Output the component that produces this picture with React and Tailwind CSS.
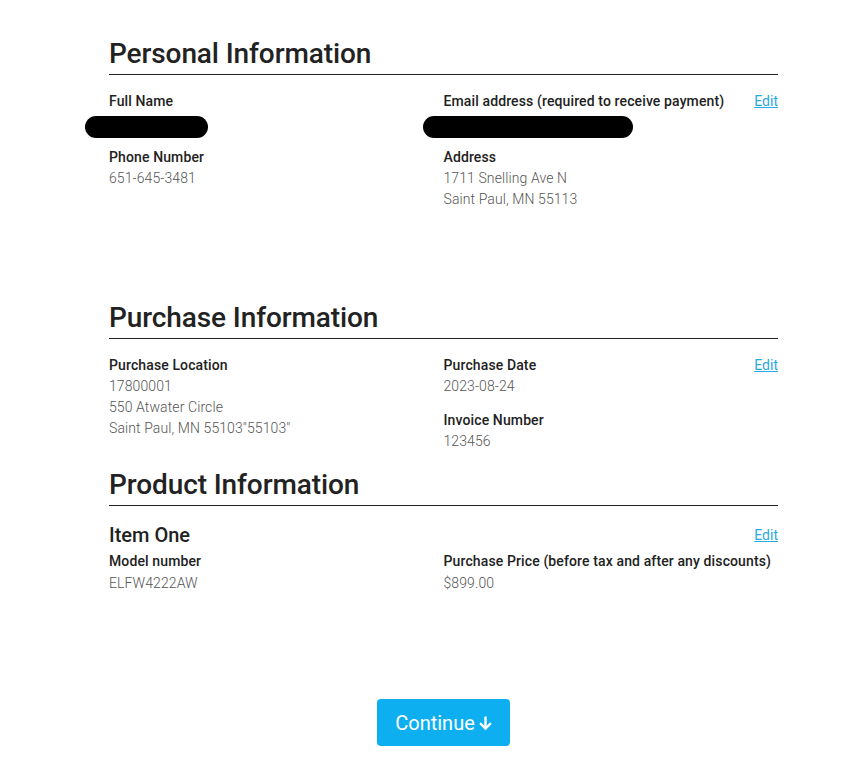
import React from 'react';

const font = { fontFamily: 'Roboto, "Noto Sans", sans-serif' };

function Heading({ children, className = '' }) {
    return (
        <h2 className={`text-[28px] leading-[34px] font-medium text-[#222] pb-[3px] border-b border-[#222] tracking-[-0.1px] ${className}`}>
            {children}
        </h2>
    );
}

function Label({ children }) {
    return <div className="text-[14px] leading-[21px] font-medium text-[#222] tracking-[0.12px]">{children}</div>;
}

function Value({ children }) {
    return <div className="text-[14px] leading-[21px] font-light text-[#555] tracking-[0.1px]">{children}</div>;
}

function EditLink() {
    return (
        <a href="#" className="text-[14px] leading-[21px] text-[#29a9e1] underline">
            Edit
        </a>
    );
}

export default function App() {
    return (
        <div className="min-h-screen bg-white" style={font}>
            <div className="ml-[109px] w-[669px] pt-[37px]">
                <Heading>Personal Information</Heading>
                <div className="grid grid-cols-2 mt-[16px]">
                    <div className="flex flex-col">
                        <Label>Full Name</Label>
                        <div className="-ml-[24px] mt-[4px] w-[123px] h-[22px] rounded-full bg-black"></div>
                        <div className="mt-[9px]">
                            <Label>Phone Number</Label>
                        </div>
                        <Value>651-645-3481</Value>
                    </div>
                    <div className="flex flex-col">
                        <div className="flex justify-between">
                            <Label>Email address (required to receive payment)</Label>
                            <EditLink />
                        </div>
                        <div className="-ml-[21px] mt-[4px] w-[210px] h-[22px] rounded-full bg-black"></div>
                        <div className="mt-[9px]">
                            <Label>Address</Label>
                        </div>
                        <Value>1711 Snelling Ave N</Value>
                        <Value>Saint Paul, MN 55113</Value>
                    </div>
                </div>

                <Heading className="mt-[91px]">Purchase Information</Heading>
                <div className="grid grid-cols-2 mt-[16px]">
                    <div className="flex flex-col">
                        <Label>Purchase Location</Label>
                        <Value>17800001</Value>
                        <Value>550 Atwater Circle</Value>
                        <Value>Saint Paul, MN 55103"55103"</Value>
                    </div>
                    <div className="flex flex-col">
                        <div className="flex justify-between">
                            <Label>Purchase Date</Label>
                            <EditLink />
                        </div>
                        <Value>2023-08-24</Value>
                        <div className="mt-[13px]">
                            <Label>Invoice Number</Label>
                        </div>
                        <Value>123456</Value>
                    </div>
                </div>

                <Heading className="mt-[16px]">Product Information</Heading>
                <div className="flex justify-between items-center mt-[15px]">
                    <h3 className="text-[20px] leading-[28px] font-medium text-[#222]">Item One</h3>
                    <EditLink />
                </div>
                <div className="grid grid-cols-2 mt-[2px]">
                    <div className="flex flex-col">
                        <Label>Model number</Label>
                        <div className="mt-[1px]">
                            <Value>ELFW4222AW</Value>
                        </div>
                    </div>
                    <div className="flex flex-col">
                        <Label>Purchase Price (before tax and after any discounts)</Label>
                        <div className="mt-[1px]">
                            <Value>$899.00</Value>
                        </div>
                    </div>
                </div>

                <div className="flex justify-center mt-[105px] pb-[33px]">
                    <button className="w-[133px] h-[47px] rounded-[4px] bg-[#0eaff0] text-white text-[20px] flex items-center justify-center gap-[4px]">
                        <span>Continue</span>
                        <svg width="13" height="14" viewBox="0 0 13 14" fill="none" stroke="white" strokeWidth="2.4" strokeLinecap="round" strokeLinejoin="round">
                            <path d="M6.5 1.5v11" />
                            <path d="M1.8 7.8l4.7 4.7 4.7-4.7" />
                        </svg>
                    </button>
                </div>
            </div>
        </div>
    );
}
